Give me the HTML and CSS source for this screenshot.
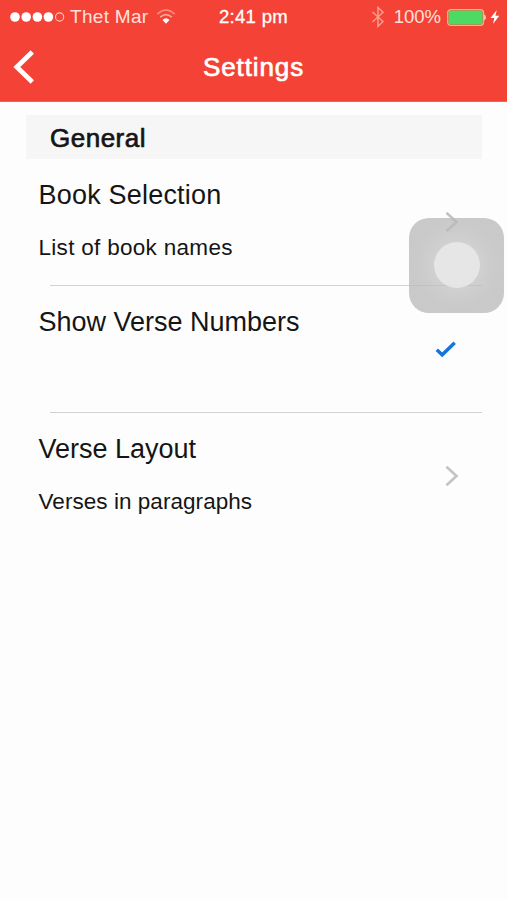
FILE: index.html
```html
<!DOCTYPE html>
<html lang="en">
<head>
<meta charset="utf-8">
<title>Settings</title>
<link rel="stylesheet" href="styles.css">
</head>
<body>
<header class="header">
  <div class="status">
    <div class="carrier">
      <svg class="signal" width="55" height="12" viewBox="0 0 55 12"><g fill="#fff"><circle cx="5" cy="6" r="4.8"/><circle cx="16.2" cy="6" r="4.8"/><circle cx="27.4" cy="6" r="4.8"/><circle cx="38.4" cy="6" r="4.8"/></g><circle cx="49.6" cy="6" r="4.1" fill="none" stroke="#ffc3b8" stroke-width="1.1"/></svg>
      <span class="carrier-name">Thet Mar</span>
      <svg class="wifi" width="20" height="16" viewBox="0 0 20 16" fill="none" stroke-width="1.7"><path d="M1.2 5.1Q10-3 18.800 5.100" stroke="#fb8a78"/><path d="M4.200 8.200Q10 3 15.800 8.200" stroke="#fca797"/><path d="M6.500 11Q10 7.500 13.500 11L10 14.700Z" fill="#fff"/></svg>
    </div>
    <span class="time">2:41 pm</span>
    <div class="power">
      <svg class="bluetooth" width="14" height="22" viewBox="0 0 14 22" fill="none" stroke="#fb9c8c" stroke-width="1.5"><path d="M1.500 6L12 15.500L7 20.300V1.500L12 6.300L1.500 16"/></svg>
      <span class="percent">100%</span>
      <svg class="battery" width="40" height="17" viewBox="0 0 40 17"><rect x=".7" y=".7" width="35.800" height="15.600" rx="3" fill="#f44336" stroke="#f5b183" stroke-width="1.300"/><rect x="1.600" y="1.600" width="34" height="13.800" rx="1.800" fill="#4cd964"/><path d="M37.300 5.300Q40.300 8.500 37.300 11.700Z" fill="#ffe9e3"/></svg>
      <svg class="bolt" width="10" height="16" viewBox="0 0 10 16"><path d="M6.800 1L.5 9H4.300L3 15L9.300 6.700H5.400Z" fill="#fff"/></svg>
    </div>
  </div>
  <nav class="nav">
    <svg class="back" width="24" height="36" viewBox="0 0 24 36"><path d="M20.300 3L4.800 18L20.300 33" fill="none" stroke="#fff" stroke-width="4.800"/></svg>
    <h1 class="title">Settings</h1>
  </nav>
</header>
<main class="settings">
  <h2 class="section">General</h2>
  <div class="row">
    <div class="texts"><div class="name">Book Selection</div><div class="detail">List of book names</div></div>
    <svg class="chevron" width="14" height="22" viewBox="0 0 14 22"><path d="M1.500 1.700L11.500 11L1.500 20.300"/></svg>
  </div>
  <div class="row">
    <div class="texts"><div class="name name-tight">Show Verse Numbers</div></div>
    <svg class="check" width="22" height="18" viewBox="0 0 22 18"><path d="M1.800 9.800L7.200 14.800L19.700 2.800"/></svg>
  </div>
  <div class="row">
    <div class="texts"><div class="name name-tight">Verse Layout</div><div class="detail detail-tight">Verses in paragraphs</div></div>
    <svg class="chevron" width="14" height="22" viewBox="0 0 14 22"><path d="M1.500 1.700L11.500 11L1.500 20.300"/></svg>
  </div>
</main>
<div class="assistive"></div>
</body>
</html>
```
FILE: styles.css
```css
* { box-sizing: border-box; }
body {
  margin: 0;
  position: relative;
  height: 900px;
  overflow: hidden;
  background: #fdfdfd;
  color: #151515;
  font-family: "Liberation Sans", Arial, sans-serif;
}
svg { display: block; flex: none; }
.header {
  height: 102px;
  background: #f44336;
  border-bottom: 1px solid #e8675c;
  color: #fff;
}
.status {
  display: grid;
  grid-template-columns: 219px 1fr auto;
  height: 34px;
  align-items: center;
  padding-right: 7px;
  font-size: 19px;
  line-height: 22px;
  white-space: nowrap;
}
.carrier, .power { display: flex; align-items: center; }
.carrier { padding-left: 10px; color: #ffe1db; }
.carrier-name { margin-left: 5px; letter-spacing: .3px; }
.wifi { margin-left: 8px; }
.time { font-size: 18.5px; letter-spacing: .3px; -webkit-text-stroke: .3px #fff; }
.percent { margin-left: 9px; font-size: 18.5px; color: #ffe1db; }
.battery { margin-left: 6px; }
.bolt { margin-left: 3px; }
.nav {
  display: grid;
  grid-template-columns: 40px 1fr 40px;
  align-items: center;
  height: 66px;
}
.back { margin-left: 12px; }
.title {
  margin: 0;
  text-align: center;
  font-size: 26px;
  line-height: 30px;
  font-weight: 400;
  letter-spacing: .9px;
  -webkit-text-stroke: .7px #fff;
}
.settings { padding: 13px 25px 0 26px; }
.section {
  margin: 0;
  height: 44px;
  padding-left: 24px;
  background: #f6f6f6;
  font-size: 26px;
  line-height: 46px;
  font-weight: 400;
  letter-spacing: .5px;
  -webkit-text-stroke: .7px #151515;
}
.row {
  display: flex;
  justify-content: space-between;
  align-items: center;
  height: 127px;
  padding: 0 23px 0 12.5px;
  background: linear-gradient(#d2d2d2, #d2d2d2) 24px 100% / 100% 1px no-repeat;
}
.row:last-child { background: none; }
.texts { align-self: flex-start; padding-top: 21px; }
.name { font-size: 27px; line-height: 31px; letter-spacing: .2px; }
.name-tight { letter-spacing: 0; }
.detail { margin-top: 24px; font-size: 22.5px; line-height: 26px; letter-spacing: .3px; }
.detail-tight { letter-spacing: .05px; }
.chevron { margin-bottom: 2px; }
.chevron path { fill: none; stroke: #c3c3c6; stroke-width: 2.6; }
.check { margin: 0 2px 2px 0; }
.check path { fill: none; stroke: #1274dc; stroke-width: 3.4; }
.assistive {
  position: absolute;
  left: 409px;
  top: 218px;
  width: 95px;
  height: 95px;
  border-radius: 20px;
  background: radial-gradient(circle at 48px 47px, rgba(194,194,194,.75) 22px, rgba(190,190,190,.75) 29px, rgba(186,186,186,.75) 38px, rgba(184,184,184,.75) 46px);
}
.assistive::after {
  content: "";
  position: absolute;
  left: 25px;
  top: 24px;
  width: 46px;
  height: 46px;
  border-radius: 50%;
  background: rgba(236,236,236,.75);
}
```
